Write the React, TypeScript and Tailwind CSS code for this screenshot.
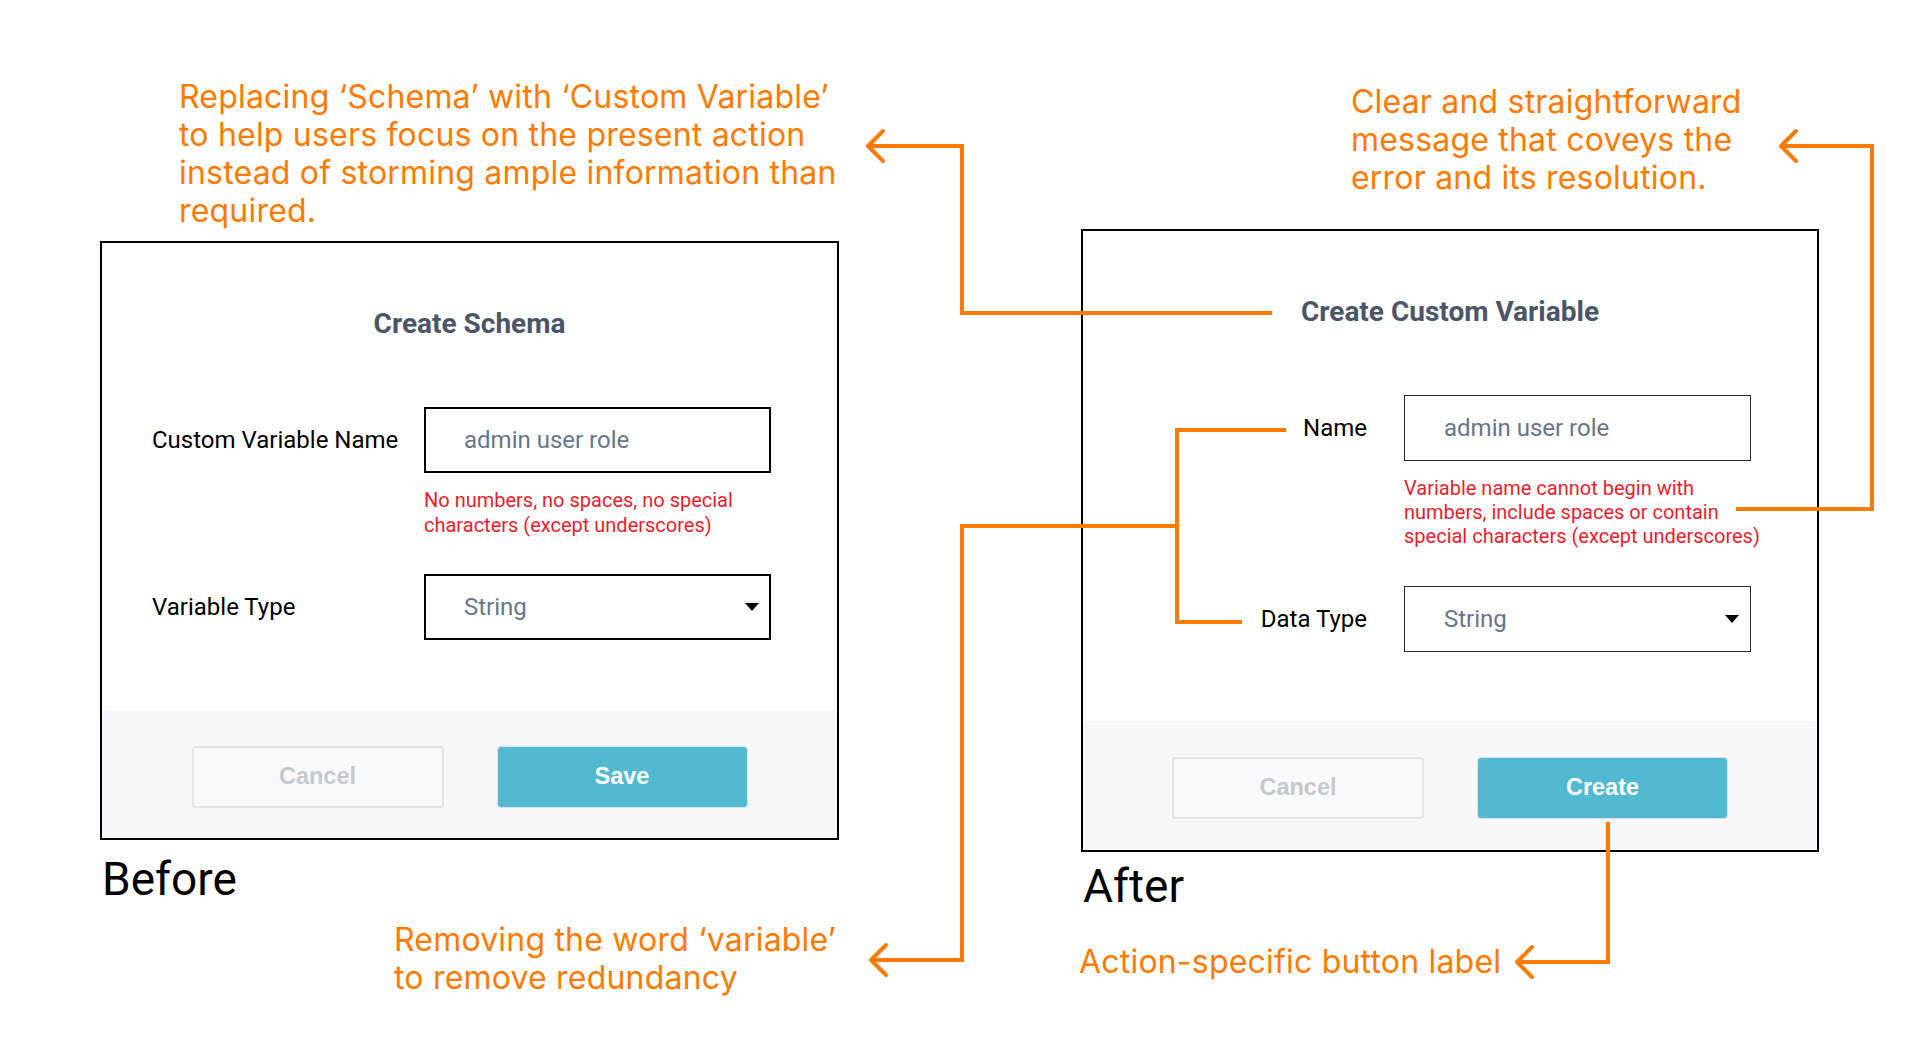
import React from "react";

/* -------------------------------------------------------
   SMALL PIECES
---------------------------------------------------------*/
const ORANGE = "#ff7a00";

const Caret = () => (
  <svg width="14" height="8" viewBox="0 0 14 8" className="shrink-0">
    <polygon points="0,0 14,0 7,8" fill="#000" />
  </svg>
);

type FieldProps = {
  value: string;
  select?: boolean;
  thin?: boolean;
};

const Field = ({ value, select, thin }: FieldProps) => (
  <div
    className={
      "flex items-center justify-between w-[347px] h-[66px] bg-white " +
      (thin ? "border border-[#2b2b2b] pl-[39px] pr-[11px]" : "border-2 border-black pl-[38px] pr-[10px]")
    }
  >
    <span className="text-[24px] text-[#687589]">{value}</span>
    {select && <Caret />}
  </div>
);

const Footer = ({ primary, h }: { primary: string; h: string }) => (
  <div className={"flex justify-center gap-[53px] bg-[#f8f8fa] pt-[36px] " + h}>
    <button className="w-[252px] h-[62px] rounded-[4px] border-2 border-[#e2e5e9] bg-[#f8f9fa] text-[23.5px] font-bold text-[#c4c9cf] [font-family:'Liberation_Sans',Arial,sans-serif]">
      Cancel
    </button>
    <button className="w-[251px] h-[62px] rounded-[4px] border border-[#d5e4ea] bg-[#53b9d1] text-[23.5px] font-bold text-white [font-family:'Liberation_Sans',Arial,sans-serif]">
      {primary}
    </button>
  </div>
);

/* -------------------------------------------------------
   PANELS
---------------------------------------------------------*/
const BeforePanel = () => (
  <div className="flex flex-col h-[599px] border-2 border-black bg-white">
    <div className="flex-1 flex flex-col pt-[64px]">
      <h2 className="text-center text-[28px] leading-[34px] font-bold text-[#4b5567]">
        Create Schema
      </h2>

      <div className="flex items-center mt-[66px] pl-[50px]">
        <span className="w-[272px] text-[24px] text-black">Custom Variable Name</span>
        <Field value="admin user role" />
      </div>
      <p className="ml-[322px] mt-[15px] text-[20px] leading-[24.5px] text-[#ea1d2d]">
        No numbers, no spaces, no special
        <br />
        characters (except underscores)
      </p>

      <div className="flex items-center mt-[37px] pl-[50px]">
        <span className="w-[272px] text-[24px] text-black">Variable Type</span>
        <Field value="String" select />
      </div>
    </div>
    <Footer primary="Save" h="h-[128px]" />
  </div>
);

const AfterPanel = () => (
  <div className="flex flex-col h-[623px] border-2 border-black bg-white">
    <div className="flex-1 flex flex-col pt-[64px]">
      <h2 className="text-center text-[28px] leading-[34px] font-bold text-[#4b5567]">
        Create Custom Variable
      </h2>

      <div className="flex items-center mt-[66px]">
        <span className="w-[321px] pr-[37px] text-right text-[24px] text-black">Name</span>
        <Field value="admin user role" thin />
      </div>
      <p className="ml-[321px] mt-[15px] text-[20px] leading-[24px] text-[#ea1d2d]">
        Variable name cannot begin with
        <br />
        numbers, include spaces or contain
        <br />
        special characters (except underscores)
      </p>

      <div className="flex items-center mt-[38px]">
        <span className="w-[321px] pr-[37px] text-right text-[24px] text-black">Data Type</span>
        <Field value="String" select thin />
      </div>
    </div>
    <Footer primary="Create" h="h-[129px]" />
  </div>
);

/* -------------------------------------------------------
   CONNECTORS (overlay)
---------------------------------------------------------*/
const Connectors = () => (
  <svg
    className="absolute inset-0 pointer-events-none"
    width="1920"
    height="1040"
    viewBox="0 0 1920 1040"
    fill="none"
    stroke={ORANGE}
    strokeWidth="4"
  >
    {/* title -> top-left note */}
    <path d="M1272 313 H962 V146 H869" />
    <path d="M883 131 L868 146 L883 161" strokeLinecap="round" strokeLinejoin="round" />

    {/* error message -> top-right note */}
    <path d="M1736 509 H1872 V146 H1783" />
    <path d="M1796 131 L1781 146 L1796 161" strokeLinecap="round" strokeLinejoin="round" />

    {/* labels bracket -> bottom-left note */}
    <path d="M1286 430 H1177 V622 H1242" />
    <path d="M1177 526 H962 V960 H873" />
    <path d="M886 945 L871 960 L886 975" strokeLinecap="round" strokeLinejoin="round" />

    {/* create button -> bottom-right note */}
    <path d="M1608 822 V962 H1519" />
    <path d="M1532 947 L1517 962 L1532 977" strokeLinecap="round" strokeLinejoin="round" />
  </svg>
);

/* -------------------------------------------------------
   PAGE
---------------------------------------------------------*/
export default function App() {
  const note =
    "text-[32px] leading-[38px] tracking-[0.2px] text-[#ff7a00] [font-family:Inter,'Noto_Sans',sans-serif]";

  return (
    <div className="relative w-[1920px] h-[1040px] overflow-hidden bg-white [font-family:Roboto,'Liberation_Sans',sans-serif]">
      <div className="flex">
        {/* BEFORE */}
        <div className="ml-[100px] w-[739px] flex flex-col">
          <p className={note + " ml-[79px] mt-[78px] whitespace-nowrap"}>
            Replacing ‘Schema’ with ‘Custom Variable’
            <br />
            to help users focus on the present action
            <br />
            instead of storming ample information than
            <br />
            required.
          </p>
          <div className="mt-[11px]">
            <BeforePanel />
          </div>
          <span className="ml-[2px] mt-[13px] text-[46px] leading-[52px] text-black">Before</span>
          <p className={note + " ml-[294px] mt-[16px] whitespace-nowrap"}>
            Removing the word ‘variable’
            <br />
            to remove redundancy
          </p>
        </div>

        {/* AFTER */}
        <div className="ml-[242px] w-[738px] flex flex-col">
          <p className={note + " ml-[270px] mt-[83px] whitespace-nowrap"}>
            Clear and straightforward
            <br />
            message that coveys the
            <br />
            error and its resolution.
          </p>
          <div className="mt-[32px]">
            <AfterPanel />
          </div>
          <span className="ml-[2px] mt-[8px] text-[46px] leading-[52px] text-black">After</span>
          <p className={note + " ml-[-2px] mt-[31px] whitespace-nowrap"}>
            Action-specific button label
          </p>
        </div>
      </div>

      <Connectors />
    </div>
  );
}
